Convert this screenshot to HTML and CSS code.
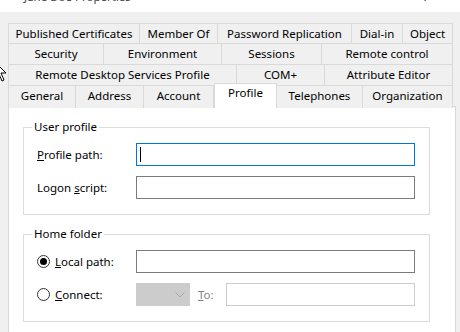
FILE: index.html
```html
<!DOCTYPE html>
<html lang="en">
<head>
    <meta charset="UTF-8">
    <title>Jane Doe Properties</title>
    <link rel="stylesheet" href="styles.css">
</head>
<body>
    <div class="titlebar">
        <span class="title">Jane Doe Properties</span>
        <span class="title-buttons"><span>?</span><span>&#x2715;</span></span>
    </div>

    <svg class="cursor" width="14" height="22" viewBox="0 0 14 22">
        <path d="M1 1 L1 17 L5 13 L8 20 L10 19 L7 12 L12 12 Z" fill="#fff" stroke="#000" stroke-width="1"/>
    </svg>

    <div class="dialog">
        <div class="tabs">
            <div class="tab-row row-1">
                <div class="tab">Published Certificates</div>
                <div class="tab">Member Of</div>
                <div class="tab">Password Replication</div>
                <div class="tab">Dial-in</div>
                <div class="tab">Object</div>
            </div>
            <div class="tab-row row-2">
                <div class="tab">Security</div>
                <div class="tab">Environment</div>
                <div class="tab">Sessions</div>
                <div class="tab">Remote control</div>
            </div>
            <div class="tab-row row-3">
                <div class="tab">Remote Desktop Services Profile</div>
                <div class="tab">COM+</div>
                <div class="tab">Attribute Editor</div>
            </div>
            <div class="tab-row row-4">
                <div class="tab">General</div>
                <div class="tab">Address</div>
                <div class="tab">Account</div>
                <div class="tab active">Profile</div>
                <div class="tab">Telephones</div>
                <div class="tab">Organization</div>
            </div>
        </div>

        <div class="panel">
            <fieldset class="group">
                <legend>User profile</legend>
                <div class="field">
                    <label class="label"><span><u>P</u>rofile path:</span></label>
                    <div class="textbox focused"><span class="caret"></span></div>
                </div>
                <div class="field">
                    <label class="label"><span>Logon <u>s</u>cript:</span></label>
                    <div class="textbox"></div>
                </div>
            </fieldset>

            <fieldset class="group">
                <legend>Home folder</legend>
                <div class="field">
                    <label class="label radio-label"><span class="radio checked"></span><span><u>L</u>ocal path:</span></label>
                    <div class="textbox"></div>
                </div>
                <div class="field">
                    <label class="label radio-label"><span class="radio"></span><span><u>C</u>onnect:</span></label>
                    <div class="combo">
                        <svg width="10" height="6" viewBox="0 0 10 6"><path d="M0.5 0.5 L5 5 L9.5 0.5" fill="none" stroke="#a6a6a6" stroke-width="1"/></svg>
                    </div>
                    <span class="to-label"><u>T</u>o:</span>
                    <div class="textbox disabled"></div>
                </div>
            </fieldset>
        </div>
    </div>
</body>
</html>
```

FILE: styles.css
```css
body {
    margin: 0;
    width: 460px;
    height: 332px;
    overflow: hidden;
    position: relative;
    font-family: "Segoe UI", "Noto Sans", sans-serif;
    font-size: 11.5px;
    color: #000;
    background-color: #f0f0f0;
}
.titlebar {
    height: 12px;
    overflow: hidden;
    background-color: #fff;
    display: flex;
    justify-content: space-between;
    padding: 0 12px 0 24px;
}
.title {
    margin-top: -11px;
    line-height: 16px;
    color: #444;
}
.title-buttons {
    margin-top: -11px;
    line-height: 16px;
    display: flex;
    gap: 10px;
    color: #444;
}
.cursor {
    position: absolute;
    left: -6px;
    top: 61px;
}
.dialog {
    padding: 11px 0 0 8px;
}
.tab-row {
    display: grid;
    height: 21px;
}
.tab-row.row-1 {
    height: 20px;
    grid-template-columns: 132px 78px 134px 51px 50px;
}
.tab-row.row-2 {
    grid-template-columns: 96px 118px 100px 131px;
}
.tab-row.row-3 {
    grid-template-columns: 229px 88px 128px;
}
.tab-row.row-4 {
    grid-template-columns: 68px 68px 70px 63px 86px 90px;
}
.tab {
    box-sizing: border-box;
    border-top: 1px solid #d9d9d9;
    border-right: 1px solid #d9d9d9;
    background-color: #f0f0f0;
    text-align: center;
    line-height: 19px;
    white-space: nowrap;
}
.tab:first-child {
    border-left: 1px solid #d9d9d9;
}
.tab.active {
    position: relative;
    z-index: 1;
    align-self: start;
    height: 25px;
    margin-top: -2px;
    background-color: #fff;
    border-left: 1px solid #d9d9d9;
    line-height: 18px;
}
.panel {
    box-sizing: border-box;
    width: 448px;
    height: 240px;
    background-color: #fff;
    border: 1px solid #d9d9d9;
    padding-top: 12px;
}
.group {
    box-sizing: border-box;
    width: 407px;
    margin: 0 0 11px 14px;
    padding: 8px 14px 15px 13px;
    border: 1px solid #dcdcdc;
}
.group legend {
    padding: 0 2px;
    margin-left: -5px;
    line-height: 16px;
}
.field {
    display: flex;
    align-items: center;
    height: 23px;
}
.field + .field {
    margin-top: 10px;
}
.label {
    width: 99px;
    flex: none;
    display: flex;
    align-items: center;
    white-space: nowrap;
}
.radio-label {
    gap: 5px;
}
.radio {
    box-sizing: border-box;
    width: 13px;
    height: 13px;
    border: 1px solid #333;
    border-radius: 50%;
    position: relative;
}
.radio.checked::after {
    content: "";
    position: absolute;
    left: 2px;
    top: 2px;
    width: 7px;
    height: 7px;
    border-radius: 50%;
    background-color: #000;
}
.textbox {
    box-sizing: border-box;
    flex: 1;
    height: 23px;
    border: 1px solid #7a7a7a;
    background-color: #fff;
    position: relative;
}
.textbox.focused {
    border-color: #0078d7;
}
.textbox.disabled {
    border-color: #cccccc;
}
.caret {
    position: absolute;
    left: 3px;
    top: 3px;
    width: 1px;
    height: 15px;
    background-color: #000;
}
.combo {
    box-sizing: border-box;
    width: 54px;
    height: 23px;
    background-color: #cccccc;
    display: flex;
    align-items: center;
    justify-content: flex-end;
    padding-right: 5px;
}
.to-label {
    width: 36px;
    padding-left: 8px;
    box-sizing: border-box;
    color: #838383;
}
```
